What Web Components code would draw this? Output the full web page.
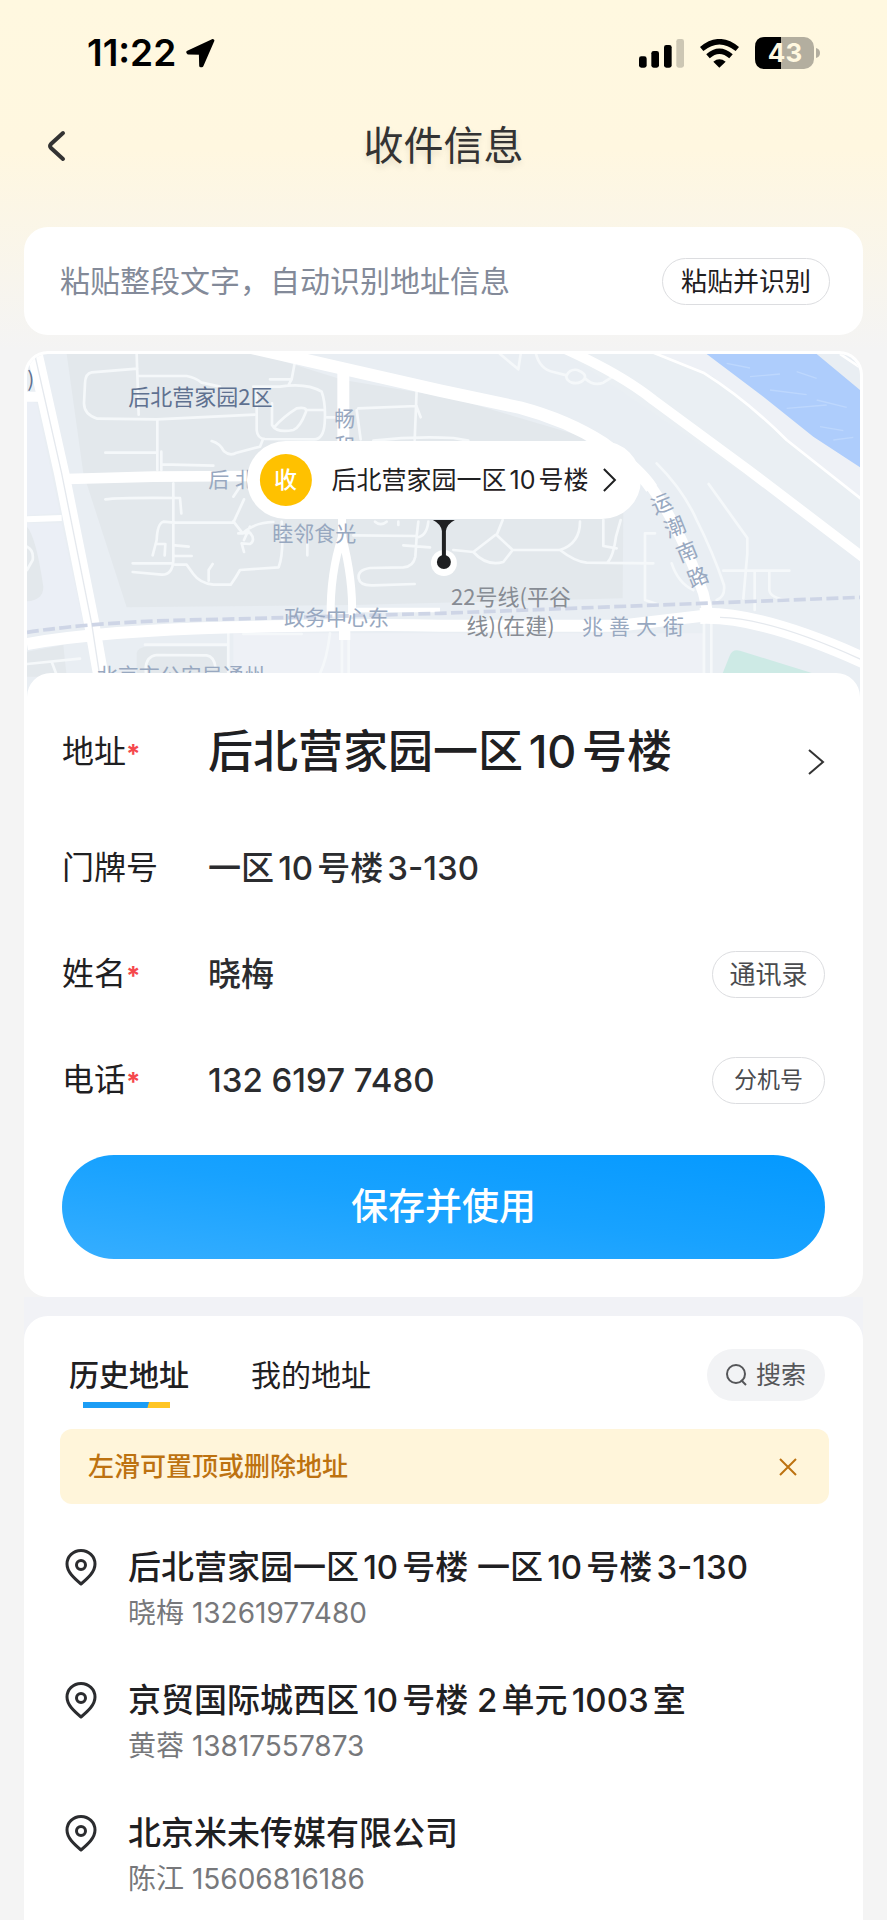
<!DOCTYPE html>
<html lang="zh-CN">
<head>
<meta charset="UTF-8">
<meta name="viewport" content="width=device-width, initial-scale=1.0">
<title>收件信息</title>
<style>
    body {
        margin: 0;
        min-height: 100vh;
        display: flex;
        flex-direction: column;
        font-family: Inter, "Noto Sans CJK SC", sans-serif;
        color: #1f2022;
        background: #f4f4f4 linear-gradient(#fff8e0 0, #fff7e0 150px, #f4f4f4 350px) no-repeat;
        text-autospace: normal;
    }
    main {
        flex: 1;
        display: flex;
        flex-direction: column;
        padding: 41px 24px 0;
    }
    delivery-card {
        margin-top: 16px;
    }
    history-card {
        flex: 1;
    }
</style>
</head>
<body>
<status-bar time="11:22" battery="43"></status-bar>
<nav-header>收件信息</nav-header>
<main>
    <paste-bar></paste-bar>
    <delivery-card>
        <delivery-map slot="map">后北营家园一区10号楼</delivery-map>
        <address-row label="地址">后北营家园一区10号楼</address-row>
        <form-field label="门牌号" value="一区10号楼3-130"></form-field>
        <form-field label="姓名" value="晓梅" required>
            <pill-button slot="action">通讯录</pill-button>
        </form-field>
        <form-field label="电话" value="132 6197 7480" type="tel" required>
            <pill-button slot="action" small>分机号</pill-button>
        </form-field>
    </delivery-card>
    <history-card>
        <tip-banner slot="tip">左滑可置顶或删除地址</tip-banner>
        <address-item contact="晓梅 13261977480">后北营家园一区10号楼 一区10号楼3-130</address-item>
        <address-item contact="黄蓉 13817557873">京贸国际城西区10号楼 2单元1003室</address-item>
        <address-item contact="陈江 15606816186">北京米未传媒有限公司</address-item>
    </history-card>
</main>

<script>
const resetButton = `
    button {
        margin: 0;
        padding: 0;
        border: none;
        background: none;
        color: inherit;
        font-family: inherit;
        cursor: pointer;
    }
    svg {
        display: block;
        flex: none;
    }
`;

class StatusBar extends HTMLElement {
    constructor() {
        super();
        this.attachShadow({ mode: "open" });
    }

    connectedCallback() {
        const battery = this.getAttribute("battery");

        this.shadowRoot.innerHTML = `
            <style>
                :host {
                    display: flex;
                    align-items: center;
                    justify-content: space-between;
                    height: 106px;
                    padding: 0 67px 0 87px;
                    color: #000;
                }
                div {
                    display: flex;
                    align-items: center;
                    gap: 10px;
                }
                .icons {
                    gap: 16px;
                }
                time {
                    font-size: 37px;
                    line-height: 44px;
                    font-weight: 600;
                }
                svg {
                    display: block;
                }
            </style>
            <div>
                <time>${this.getAttribute("time")}</time>
                <svg width="29" height="29" viewBox="382 57 88 88" stroke="#000" stroke-width="10" stroke-linejoin="round"><path d="M463 62 L388 97 L389 99 L426 100 L427 138 L430 138 Z"/></svg>
            </div>
            <div class="icons">
                <svg width="45" height="29" viewBox="0 0 135 87">
                    <rect x="0" y="52" width="23" height="34" rx="7"/>
                    <rect x="37" y="36" width="23" height="50" rx="7"/>
                    <rect x="75" y="18" width="23" height="68" rx="7"/>
                    <rect x="112" y="0" width="23" height="86" rx="7" fill="#cdc7b4"/>
                </svg>
                <svg width="39" height="29" viewBox="0 0 117 87" fill="none" stroke="#000" stroke-width="16">
                    <path d="M5 30 Q58 -14 112 30"/>
                    <path d="M24 52 Q58 22 93 52"/>
                    <path d="M58 86 L40 68 Q58 54 77 68 Z" fill="#000" stroke="none"/>
                </svg>
                <svg width="65" height="32" viewBox="0 0 65 32">
                    <rect width="59" height="32" rx="10" fill="#b3ae9f"/>
                    <path d="M10 0 H26 V32 H10 Q0 32 0 22 V10 Q0 0 10 0 Z"/>
                    <path d="M61 11 Q65 12 65 16 Q65 20 61 21 Z" fill="#b3ae9f"/>
                    <text x="30" y="25" text-anchor="middle" font-size="26" font-weight="700" fill="#fff8e0">${battery}</text>
                </svg>
            </div>
        `;
    }
}

class NavHeader extends HTMLElement {
    constructor() {
        super();
        this.attachShadow({ mode: "open" });
        this.shadowRoot.innerHTML = `
            <style>
                ${resetButton}
                :host {
                    display: grid;
                    grid-template-columns: 100px 1fr 100px;
                    align-items: center;
                    height: 80px;
                    color: #333;
                }
                button {
                    padding: 10px 46px;
                }
                h1 {
                    margin: 0;
                    text-align: center;
                    font-size: 40px;
                    line-height: 58px;
                    font-weight: 400;
                    text-shadow: 0 4px 6px rgba(0, 0, 0, .1);
                }
            </style>
            <button type="button" aria-label="返回">
                <svg width="20" height="32" viewBox="0 0 20 32" fill="none" stroke="#333" stroke-width="4" stroke-linecap="round"><path d="M17 3 L5 14 Q3 16 5 18 L17 29"/></svg>
            </button>
            <h1><slot></slot></h1>
        `;
    }
}

class PillButton extends HTMLElement {
    constructor() {
        super();
        this.attachShadow({ mode: "open" });
        this.shadowRoot.innerHTML = `
            <style>
                ${resetButton}
                :host {
                    display: block;
                }
                button {
                    display: block;
                    min-width: 113px;
                    padding: 0 16px;
                    border: 1px solid #dcdde0;
                    border-radius: 24px;
                    background: #fff;
                    font-size: 26px;
                    line-height: 45px;
                    color: #4a4b4e;
                }
                :host([small]) button {
                    font-size: 23px;
                }
                :host([dark]) button {
                    padding: 0 18px;
                    color: #1f2022;
                }
            </style>
            <button type="button"><slot></slot></button>
        `;
    }
}

class PasteBar extends HTMLElement {
    constructor() {
        super();
        this.attachShadow({ mode: "open" });
        this.shadowRoot.innerHTML = `
            <style>
                :host {
                    display: flex;
                    align-items: center;
                    height: 108px;
                    padding: 0 33px 0 36px;
                    border-radius: 24px;
                    background: #fff;
                }
                input {
                    flex: 1;
                    min-width: 0;
                    padding: 0;
                    border: none;
                    outline: none;
                    background: none;
                    font-family: inherit;
                    font-size: 30px;
                    line-height: 44px;
                    color: #1f2022;
                }
                input::placeholder {
                    color: #838a99;
                    opacity: 1;
                }
            </style>
            <input type="text" aria-label="地址信息" placeholder="粘贴整段文字，自动识别地址信息">
            <pill-button dark>粘贴并识别</pill-button>
        `;
    }
}

class DeliveryMap extends HTMLElement {
    constructor() {
        super();
        this.attachShadow({ mode: "open" });
        this.shadowRoot.innerHTML = `
            <style>
                ${resetButton}
                :host {
                    display: block;
                    position: relative;
                    height: 345px;
                    overflow: hidden;
                    border-radius: 21px 21px 0 0;
                    background: #e9eef3;
                }
                .canvas {
                    width: 100%;
                    height: 100%;
                    font-family: "Noto Sans CJK SC", sans-serif;
                    text-autospace: no-autospace;
                }
                .callout {
                    position: absolute;
                    top: 87px;
                    left: 50%;
                    transform: translateX(-50%);
                    display: flex;
                    flex-direction: column;
                    align-items: center;
                }
                button {
                    display: flex;
                    align-items: center;
                    height: 78px;
                    padding: 0 24px 0 13px;
                    border-radius: 39px;
                    background: #fff;
                    font-size: 25px;
                    line-height: 36px;
                    white-space: nowrap;
                }
                .badge {
                    width: 52px;
                    margin-right: 20px;
                    border-radius: 50%;
                    background: #ffc100;
                    font-size: 23px;
                    line-height: 52px;
                    font-weight: 500;
                    color: #fff;
                }
                button svg {
                    margin-left: 14px;
                }
            </style>
            <svg class="canvas" viewBox="21 42 2499 1035" preserveAspectRatio="xMidYMin slice">
                <!-- land blocks -->
                <path fill="#e3e8ec" d="M140 42 H720 L970 120 L1300 175 L1690 290 L1810 500 L1808 775 L1000 795 L320 802 L190 400 Z"/>
                <path fill="#ebeff6" d="M21 180 L50 190 L120 520 L21 525 Z M21 550 H125 L190 850 L21 870 Z"/>
                <path fill="#e3e8ec" d="M21 560 Q48 590 70 740 Q70 780 21 784 Z M21 935 L130 915 L140 1010 H21 Z"/>
                <path fill="#e3e8ec" d="M350 940 Q355 920 380 920 H620 V1077 H350 Z"/>
                <path fill="#eef1f6" d="M640 880 H2050 V1077 H640 Z M1850 42 H2060 L2520 380 V640 L2200 400 Z"/>
                <path fill="#eaeff3" d="M1910 42 L2080 110 L2300 300 L2520 475 V640 L1640 42 Z"/>
                <path fill="#aecdfc" d="M2060 42 H2390 L2520 150 V382 L2380 290 L2230 170 Z"/>
                <path fill="none" stroke="#bdd7fd" stroke-width="4" d="M2120 70 l70 14 M2190 110 l90 -8 M2250 150 l110 14 M2330 95 l60 20 M2300 205 l120 -10 M2390 180 l90 22 M2400 260 l70 12 M2440 300 l60 -8"/>
                <path fill="#cdeae5" d="M2108 1000 L2130 945 Q2138 926 2160 932 L2385 1002 V1077 H2108 Z"/>

                <!-- lanes -->
                <g fill="none" stroke="#f5f8fa" stroke-width="8" stroke-linejoin="round" stroke-linecap="round">
                    <path d="M350 42 L356 224 M352 86 L215 97 Q196 100 195 130 L192 190 Q192 224 232 236 L410 238 L704 224 M356 108 H500 Q525 112 545 128 L600 140"/>
                    <path d="M750 118 H815 L824 70 M815 118 L806 134 M700 140 H780 Q860 128 905 155 Q918 190 914 250 Q910 300 880 298 L735 297 Q712 296 710 270 V140"/>
                    <path d="M756 190 V255 Q770 280 820 270 Q840 262 858 215 Q862 200 830 205 Q790 230 762 262 M858 210 H914"/>
                    <path d="M412 240 V390 M424 335 V390 M256 338 H410 M425 373 L580 377 M575 303 Q600 310 612 334 Q630 350 650 338 L720 320 L728 300"/>
                    <path d="M256 478 Q300 472 480 474 L484 520 M460 430 V660 Q458 705 425 704 L338 696 M338 670 H455 M465 548 H640 L672 478 M640 470 L660 440 M462 548 L430 545 Q412 550 410 600 L398 646 M412 612 H436 L434 646 M465 616 L506 620 M465 648 H515"/>
                    <path d="M640 544 L668 580 M668 580 Q700 548 760 546 M655 580 L690 578 Q708 600 690 612 L665 610 L672 636 M690 560 L672 600 M785 545 Q792 640 776 682 L660 690 Q648 712 632 734 L580 734 Q540 730 520 702 L500 674 L465 674 M566 722 V690 L578 672"/>
                    <path d="M1015 205 L1190 198 M1190 150 L1184 300 M1190 200 L1202 232 M1010 210 L1022 298 M920 232 H950 M1060 302 Q1180 288 1300 294 L1345 302"/>
                    <path d="M1000 586 L1190 588 L1195 545 M1225 545 Q1220 590 1190 592 M1150 616 L1230 622 M1190 590 L1186 650 Q1180 680 1150 682 L1050 684 Q1012 690 1016 715 Q1020 738 1060 736 L1184 732 M862 600 V646 M1065 545 Q1082 560 1100 545 M1135 545 V555"/>
                    <path d="M1300 630 L1360 636 Q1400 680 1450 666 L1478 630 L1430 585 L1448 540 M1360 636 L1426 585 M1478 630 H1620 Q1680 610 1680 545 M1620 630 Q1665 665 1700 668 L1900 670 M1750 540 V618 L1790 625 M1802 540 L1788 590 Q1780 650 1762 668 M1875 580 V780 L1910 792 M1875 580 H1905"/>
                    <path d="M1440 42 L1495 88 L1502 42 M1548 42 Q1560 88 1600 96 L1640 106 Q1650 86 1672 90 Q1700 100 1694 116 Q1680 134 1655 128 Q1635 118 1640 104 M1694 114 Q1720 140 1750 128 L1775 112"/>
                    <path d="M1910 370 Q1990 450 2030 540 Q2080 640 2112 735 Q2116 770 2090 780 M2066 432 L2182 594 V640 L2170 775 M2110 692 H2308 M2204 692 V810 M2248 692 V750 Q2250 775 2305 780 M1955 670 Q1975 730 2020 750"/>
                    <path d="M375 914 H620 M625 880 V1077 M378 1000 Q372 950 410 945 L560 946 Q582 950 586 980 M21 972 L180 956 M95 965 L108 1000 M670 882 H845 M930 880 Q920 960 900 1000 M21 620 Q42 630 38 660 L21 690"/>
                    <path d="M966 900 V1077 M986 900 V1077 M2052 850 V1077 M2074 850 V1077"/>
                </g>

                <!-- main roads -->
                <g fill="none" stroke="#fff" stroke-linejoin="round">
                    <path stroke-width="46" d="M40 20 L125 400 L215 850 L255 1077"/>
                    <path stroke-width="32" d="M140 417 L400 410 L700 408"/>
                    <path stroke-width="18" d="M21 538 L125 534"/>
                    <path stroke-width="30" d="M21 170 H55"/>
                    <path stroke-width="38" d="M690 22 L970 86 L1260 152 L1500 203 Q1640 240 1750 310 Q1860 390 1895 445"/>
                    <path stroke-width="32" d="M1890 435 Q1980 560 2050 760 L2064 820"/>
                    <path stroke-width="36" d="M970 90 V330"/>
                    <path stroke-width="24" d="M966 520 V590 Q930 700 932 830 M966 590 Q1000 720 996 830"/>
                    <path stroke-width="34" d="M974 820 V900"/>
                    <path stroke-width="36" d="M21 912 Q250 872 640 862 T1260 857 H1800 L2060 826"/>
                    <path stroke-width="14" d="M1000 810 H1260"/>
                    <path stroke-width="48" d="M2040 828 Q2220 820 2540 965"/>
                    <path stroke-width="30" d="M1620 20 Q1800 100 1900 180 L2180 386 L2540 660"/>
                    <path stroke-width="8" d="M1890 34 L2050 98 Q2180 180 2300 300 L2540 490 M2460 42 L2520 82"/>
                </g>
                <g fill="none" stroke="#e5e9ee" stroke-width="4">
                    <path d="M44 42 L125 400 L215 850 L250 1077"/>
                    <path d="M2100 832 Q2260 836 2540 966"/>
                </g>
                <path fill="none" stroke="#ced5e6" stroke-width="11" stroke-dasharray="36 13" d="M21 877 Q250 842 600 838 L1260 820 L2520 772"/>

                <!-- place names -->
                <g fill="#98a8c0" font-size="63">
                    <text x="22" y="140" fill="#5f7190">)</text>
                    <text x="325" y="196" font-size="66" fill="#5f7190">后北营家园2区</text>
                    <text x="943" y="258">畅</text>
                    <text x="943" y="340">和</text>
                    <text x="565" y="442">后</text>
                    <text x="645" y="442">北</text>
                    <text x="757" y="604">睦邻食光</text>
                    <text x="792" y="856">政务中心东</text>
                    <text x="230" y="1030">北京市公安局通州</text>
                    <g fill="#878c94" text-anchor="middle">
                        <text x="1473" y="794" font-size="66">22号线(平谷</text>
                        <text x="1472" y="881" font-size="66">线)(在建)</text>
                    </g>
                    <text x="1686 1767 1848 1929" y="881">兆善大街</text>
                    <g text-anchor="middle">
                        <text transform="translate(1925 492) rotate(-22)" y="22">运</text>
                        <text transform="translate(1965 562) rotate(-22)" y="22">潮</text>
                        <text transform="translate(2001 636) rotate(-22)" y="22">南</text>
                        <text transform="translate(2034 712) rotate(-22)" y="22">路</text>
                    </g>
                </g>
            </svg>
            <div class="callout">
                <button type="button">
                    <span class="badge">收</span>
                    <slot></slot>
                    <svg width="14" height="24" viewBox="0 0 14 24" fill="none" stroke="#1f2022" stroke-width="2"><path d="M1 1 L12 12 L1 23"/></svg>
                </button>
                <svg width="26" height="58" viewBox="0 0 26 58">
                    <circle cx="13" cy="44" r="13" fill="#fff"/>
                    <path fill="#1f2022" d="M2 1 H24 Q16 5 15 12 V44 H11 V12 Q10 5 2 1 Z"/>
                    <circle cx="13" cy="43" r="7" fill="#1f2022"/>
                </svg>
            </div>
        `;
    }
}

const rowStyle = `
    :host {
        display: flex;
        align-items: center;
        height: 106px;
    }
    .label {
        flex: none;
        width: 146px;
        font-size: 32px;
        line-height: 46px;
    }
    .label span {
        font-size: 26px;
        line-height: 1;
        font-weight: 700;
        color: #f5484c;
    }
`;

class AddressRow extends HTMLElement {
    constructor() {
        super();
        this.attachShadow({ mode: "open" });
    }

    connectedCallback() {
        this.shadowRoot.innerHTML = `
            <style>
                ${resetButton}
                ${rowStyle}
                :host {
                    height: 127px;
                }
                button {
                    flex: 1;
                    display: flex;
                    align-items: flex-end;
                    justify-content: space-between;
                    text-align: left;
                    font-size: 45px;
                    line-height: 46px;
                    font-weight: 500;
                }
            </style>
            <div class="label" id="label">${this.getAttribute("label")}<span>*</span></div>
            <button type="button" aria-describedby="label">
                <slot></slot>
                <svg width="17" height="26" viewBox="0 0 17 26" fill="none" stroke="#333" stroke-width="2"><path d="M1 1 L15 13 L1 25"/></svg>
            </button>
        `;
    }
}

class FormField extends HTMLElement {
    constructor() {
        super();
        this.attachShadow({ mode: "open" });
    }

    connectedCallback() {
        const label = this.getAttribute("label");
        const value = this.getAttribute("value");
        const type = this.getAttribute("type") || "text";
        const required = this.hasAttribute("required");

        this.shadowRoot.innerHTML = `
            <style>
                ${rowStyle}
                input {
                    flex: 1;
                    min-width: 0;
                    padding: 0;
                    border: none;
                    outline: none;
                    background: none;
                    font-family: inherit;
                    font-size: 33px;
                    line-height: 46px;
                    font-weight: 500;
                    color: #2b2c2f;
                    text-autospace: normal;
                }
            </style>
            <label class="label" for="field">${label}${required ? "<span>*</span>" : ""}</label>
            <input id="field" type="${type}" value="${value}">
            <slot name="action"></slot>
        `;
    }
}

class DeliveryCard extends HTMLElement {
    constructor() {
        super();
        this.attachShadow({ mode: "open" });
        this.shadowRoot.innerHTML = `
            <style>
                ${resetButton}
                :host {
                    display: block;
                    padding: 3px;
                    border-radius: 24px;
                    background: #fff;
                }
                form {
                    position: relative;
                    margin-top: -26px;
                    padding: 15px 35px 35px;
                    border-radius: 24px;
                    background: #fff;
                }
                .save {
                    display: block;
                    width: 100%;
                    margin-top: 22px;
                    border-radius: 52px;
                    background: linear-gradient(to top right, #36aeff, #18a2ff 50%, #0499ff);
                    font-size: 37px;
                    line-height: 104px;
                    font-weight: 500;
                    color: #fff;
                }
            </style>
            <slot name="map"></slot>
            <form>
                <slot></slot>
                <button class="save" type="button">保存并使用</button>
            </form>
        `;
    }
}

class HistoryCard extends HTMLElement {
    constructor() {
        super();
        this.attachShadow({ mode: "open" });
        this.shadowRoot.innerHTML = `
            <style>
                ${resetButton}
                :host {
                    display: flex;
                    padding-top: 19px;
                    background: #f1f2f6;
                }
                section {
                    flex: 1;
                    padding: 33px 34px 18px 36px;
                    border-radius: 24px 24px 0 0;
                    background: #fff;
                }
                header {
                    display: flex;
                    justify-content: space-between;
                    margin-bottom: 28px;
                    padding: 0 4px 0 9px;
                }
                .tabs {
                    display: flex;
                    gap: 62px;
                }
                .tabs button {
                    position: relative;
                    font-size: 30px;
                    line-height: 52px;
                }
                .tabs [aria-selected="true"] {
                    font-weight: 500;
                }
                .tabs [aria-selected="true"]::after {
                    content: "";
                    position: absolute;
                    top: 53px;
                    left: 14px;
                    right: 19px;
                    height: 6px;
                    background: linear-gradient(105deg, #1b9df5 74%, #ffc524 75%);
                }
                .search {
                    display: flex;
                    align-items: center;
                    gap: 9px;
                    padding: 0 19px;
                    border-radius: 26px;
                    background: #f2f3f5;
                    font-size: 25px;
                    line-height: 52px;
                    color: #555659;
                }
                .list {
                    display: flex;
                    flex-direction: column;
                    gap: 41px;
                    margin-top: 40px;
                }
            </style>
            <section>
                <header>
                    <div class="tabs" role="tablist">
                        <button type="button" role="tab" aria-selected="true">历史地址</button>
                        <button type="button" role="tab" aria-selected="false">我的地址</button>
                    </div>
                    <button class="search" type="button">
                        <svg width="21" height="22" viewBox="0 0 21 22" fill="none" stroke="#555659" stroke-width="2"><circle cx="10" cy="10" r="9"/><path d="M15 16 L20 21"/></svg>
                        搜索
                    </button>
                </header>
                <slot name="tip"></slot>
                <div class="list" role="list"><slot></slot></div>
            </section>
        `;
    }
}

class TipBanner extends HTMLElement {
    constructor() {
        super();
        this.attachShadow({ mode: "open" });
        this.shadowRoot.innerHTML = `
            <style>
                ${resetButton}
                :host {
                    display: flex;
                    align-items: center;
                    justify-content: space-between;
                    padding: 0 24px 0 28px;
                    border-radius: 12px;
                    background: #fff5da;
                    font-size: 26px;
                    line-height: 75px;
                    font-weight: 500;
                    color: #bd7210;
                }
                button {
                    padding: 8px;
                }
            </style>
            <span><slot></slot></span>
            <button type="button" aria-label="关闭">
                <svg width="18" height="18" viewBox="0 0 18 18" stroke="#bd7210" stroke-width="2"><path d="M1 1 L17 17 M17 1 L1 17"/></svg>
            </button>
        `;

        this.shadowRoot.querySelector("button").addEventListener("click", () => this.remove());
    }
}

class AddressItem extends HTMLElement {
    constructor() {
        super();
        this.attachShadow({ mode: "open" });
    }

    connectedCallback() {
        this.setAttribute("role", "listitem");
        this.shadowRoot.innerHTML = `
            <style>
                :host {
                    display: flex;
                    gap: 31px;
                    padding-left: 5px;
                    line-height: 46px;
                }
                svg {
                    flex: none;
                    margin-top: 5px;
                }
                h2, p {
                    margin: 0;
                }
                h2 {
                    font-size: 33px;
                    font-weight: 500;
                }
                p {
                    font-size: 28px;
                    color: #77787b;
                }
            </style>
            <svg width="32" height="37" viewBox="0 0 32 37" fill="none" stroke="#2b2c2f" stroke-width="3" stroke-linejoin="round">
                <path d="M16 35 C9 29 2 23 2 15 A14 13.5 0 0 1 30 15 C30 23 23 29 16 35 Z"/>
                <circle cx="16" cy="16" r="4.5"/>
            </svg>
            <div>
                <h2><slot></slot></h2>
                <p>${this.getAttribute("contact")}</p>
            </div>
        `;
    }
}

customElements.define("status-bar", StatusBar);
customElements.define("nav-header", NavHeader);
customElements.define("pill-button", PillButton);
customElements.define("paste-bar", PasteBar);
customElements.define("delivery-map", DeliveryMap);
customElements.define("address-row", AddressRow);
customElements.define("form-field", FormField);
customElements.define("delivery-card", DeliveryCard);
customElements.define("history-card", HistoryCard);
customElements.define("tip-banner", TipBanner);
customElements.define("address-item", AddressItem);
</script>
</body>
</html>
